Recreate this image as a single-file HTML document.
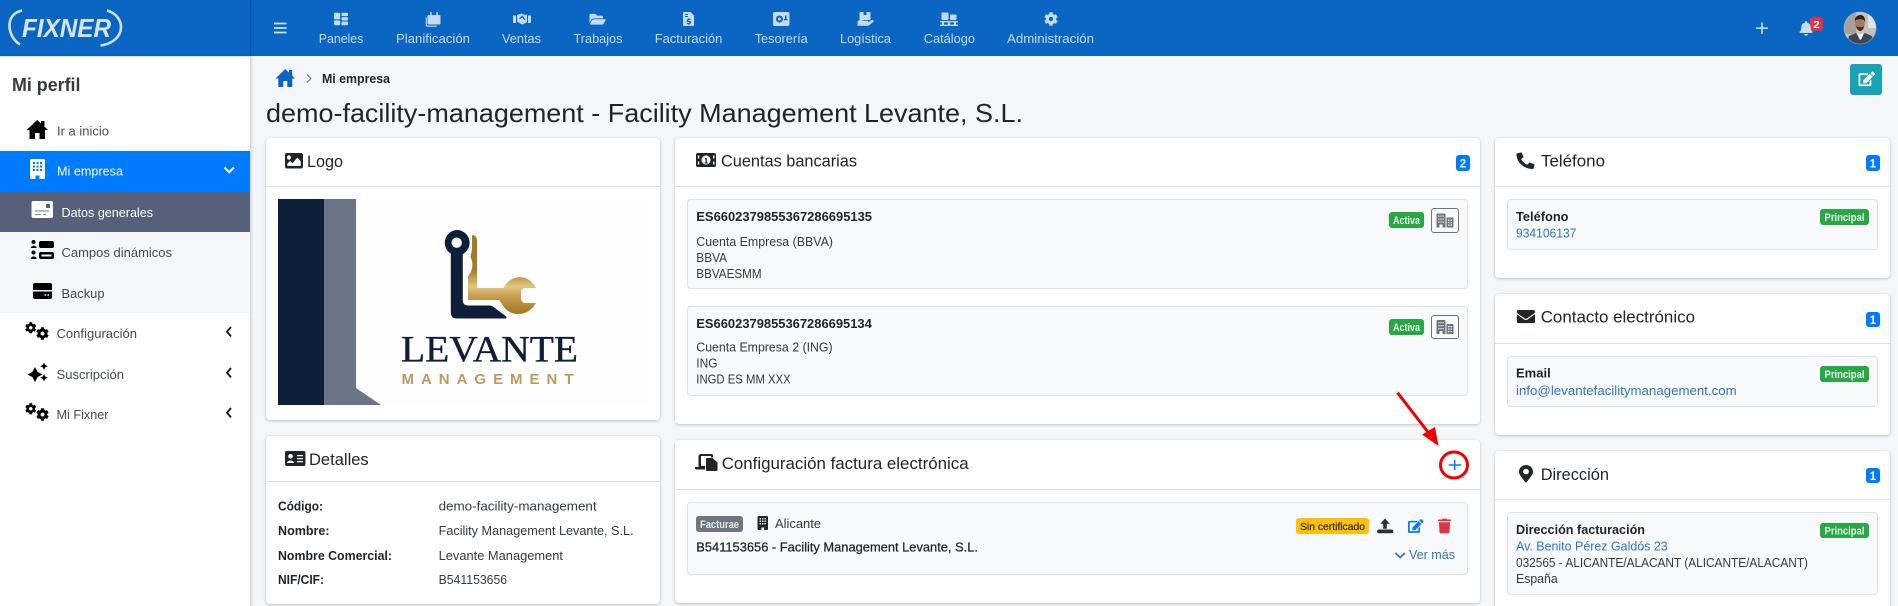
<!DOCTYPE html>
<html lang="es">
<head>
<meta charset="utf-8">
<title>Mi empresa</title>
<style>
html,body{margin:0;padding:0;width:1898px;height:606px;overflow:hidden;background:#f4f6f9;font-family:"Liberation Sans",sans-serif}
#page{position:relative;width:1898px;height:606px;overflow:hidden;background:#f4f6f9}
.a{position:absolute}
.card{position:absolute;background:#fff;border-radius:4px;box-shadow:0 0 1px rgba(0,0,0,.125),0 1px 3px rgba(0,0,0,.2)}
.hr{position:absolute;height:1px;background:#dfe1e4}
.item{position:absolute;background:#f8f9fa;border:1px solid #dee2e6;border-radius:4px;box-sizing:border-box}
.badge{position:absolute;border-radius:3px}
svg.o{position:absolute;left:0;top:0}
text{font-family:"Liberation Sans",sans-serif;font-size:13px;fill:#343a40}
.b{font-weight:700;fill:#212529}
.n{fill:#c6dbf1;font-size:13px}
.s{fill:#454b52;font-size:13px}
.t{font-size:17px;fill:#212529}
.l{fill:#2f75c9}
.w{fill:#fff}
.sm{font-size:11px}
</style>
</head>
<body>
<div id="page">
<div class="a" style="left:0;top:0;width:1898px;height:56px;background:#0b66c3"></div>
<div class="a" style="left:0;top:0;width:250px;height:56px;background:#0b66c3;box-shadow:1px 0 2px rgba(0,0,0,.25)"></div>
<div class="a" style="left:0;top:56px;width:250px;height:560px;background:#fff;border-top:1px solid #dee2e6;box-sizing:border-box;box-shadow:1px 0 3px rgba(0,0,0,.2)"></div>
<div class="a" style="left:0;top:151px;width:250px;height:41px;background:#007bff"></div>
<div class="a" style="left:0;top:192px;width:250px;height:40px;background:#566179"></div>
<div class="a" style="left:0;top:232px;width:250px;height:81px;background:#f4f6f9"></div>

<div class="card" style="left:266px;top:138px;width:394px;height:282px"><div class="hr" style="left:0;right:0;top:48px"></div></div>
<div class="a" style="left:278px;top:199px;width:370px;height:206px;background:#fefefe"></div>
<div class="card" style="left:266px;top:436px;width:394px;height:168px"><div class="hr" style="left:0;right:0;top:45px"></div></div>

<div class="card" style="left:675px;top:138px;width:805px;height:286px"><div class="hr" style="left:0;right:0;top:48px"></div></div>
<div class="item" style="left:687px;top:199px;width:781px;height:90px"></div>
<div class="item" style="left:687px;top:306px;width:781px;height:90px"></div>
<div class="card" style="left:675px;top:440px;width:805px;height:163px"><div class="hr" style="left:0;right:0;top:49px"></div></div>
<div class="item" style="left:687px;top:502px;width:781px;height:73px"></div>

<div class="card" style="left:1495px;top:138px;width:395px;height:140px"><div class="hr" style="left:0;right:0;top:48px"></div></div>
<div class="item" style="left:1507px;top:199px;width:371px;height:51px"></div>
<div class="card" style="left:1495px;top:294px;width:395px;height:141px"><div class="hr" style="left:0;right:0;top:49px"></div></div>
<div class="item" style="left:1507px;top:356px;width:371px;height:51px"></div>
<div class="card" style="left:1495px;top:451px;width:395px;height:175px"><div class="hr" style="left:0;right:0;top:48px"></div></div>
<div class="item" style="left:1507px;top:512px;width:371px;height:83px"></div>

<div class="badge" style="left:1456px;top:155px;width:14px;height:16px;background:#007bff"></div>
<div class="badge" style="left:1866px;top:155px;width:14px;height:16px;background:#007bff"></div>
<div class="badge" style="left:1866px;top:312px;width:14px;height:15px;background:#007bff"></div>
<div class="badge" style="left:1866px;top:468px;width:14px;height:15px;background:#007bff"></div>
<div class="badge" style="left:1389px;top:212px;width:35px;height:16px;background:#28a745"></div>
<div class="badge" style="left:1389px;top:319px;width:35px;height:16px;background:#28a745"></div>
<div class="badge" style="left:1820px;top:209px;width:49px;height:16px;background:#28a745"></div>
<div class="badge" style="left:1820px;top:366px;width:49px;height:16px;background:#28a745"></div>
<div class="badge" style="left:1820px;top:523px;width:49px;height:15px;background:#28a745"></div>
<div class="badge" style="left:696px;top:516px;width:47px;height:16px;background:#6c757d"></div>
<div class="badge" style="left:1296px;top:518px;width:73px;height:16px;background:#ffc107"></div>
<div class="badge" style="left:1431px;top:208px;width:28px;height:25px;border:1px solid #6c757d;box-sizing:border-box"></div>
<div class="badge" style="left:1431px;top:315px;width:28px;height:24px;border:1px solid #6c757d;box-sizing:border-box"></div>
<div class="badge" style="left:1850px;top:64px;width:32px;height:31px;background:#17a2b8"></div>
<div class="badge" style="left:1810px;top:17px;width:13px;height:14px;background:#dc3545"></div>

<svg class="o" width="1898" height="606" viewBox="0 0 1898 606" xmlns="http://www.w3.org/2000/svg">
<defs>
<symbol id="cog" viewBox="0 0 512 512"><path d="M487.4 315.7l-42.6-24.6c4.3-23.2 4.3-47 0-70.2l42.6-24.6c4.9-2.8 7.1-8.6 5.5-14-11.1-35.6-30-67.8-54.7-94.6-3.8-4.1-10-5.1-14.8-2.3L380.8 110c-17.9-15.4-38.5-27.3-60.8-35.1V25.8c0-5.6-3.9-10.5-9.4-11.7-36.7-8.2-74.3-7.8-109.2 0-5.5 1.2-9.4 6.1-9.4 11.7V75c-22.2 7.9-42.8 19.8-60.8 35.1L88.7 85.5c-4.9-2.8-11-1.9-14.8 2.3-24.7 26.7-43.6 58.9-54.7 94.6-1.7 5.4.6 11.2 5.5 14L67.3 221c-4.3 23.2-4.3 47 0 70.2l-42.6 24.6c-4.9 2.8-7.1 8.6-5.5 14 11.1 35.6 30 67.8 54.7 94.6 3.8 4.1 10 5.1 14.8 2.3l42.6-24.6c17.9 15.4 38.5 27.3 60.8 35.1v49.2c0 5.6 3.9 10.5 9.4 11.7 36.7 8.2 74.3 7.8 109.2 0 5.5-1.2 9.4-6.1 9.4-11.7v-49.2c22.2-7.9 42.8-19.8 60.8-35.1l42.6 24.6c4.9 2.8 11 1.9 14.8-2.3 24.7-26.7 43.6-58.9 54.7-94.6 1.5-5.5-.7-11.3-5.6-14.1zM256 336c-44.1 0-80-35.9-80-80s35.9-80 80-80 80 35.9 80 80-35.9 80-80 80z"/></symbol>
<symbol id="edit" viewBox="0 0 576 512"><path d="M402.6 83.2l90.2 90.2c3.8 3.8 3.8 10 0 13.8L274.4 405.6l-92.8 10.3c-12.4 1.4-22.9-9.1-21.5-21.5l10.3-92.8L388.8 83.2c3.8-3.8 10-3.8 13.8 0zm162-22.9l-48.8-48.8c-15.2-15.2-39.9-15.2-55.2 0l-35.4 35.4c-3.8 3.8-3.8 10 0 13.8l90.2 90.2c3.8 3.8 10 3.8 13.8 0l35.4-35.4c15.2-15.3 15.2-40 0-55.2zM384 346.2V448H64V128h229.8c3.2 0 6.2-1.3 8.5-3.5l40-40c7.6-7.6 2.2-20.5-8.5-20.5H48C21.5 64 0 85.5 0 112v352c0 26.5 21.5 48 48 48h352c26.5 0 48-21.5 48-48V306.2c0-10.7-12.9-16-20.5-8.5l-40 40c-2.2 2.3-3.5 5.3-3.5 8.5z"/></symbol>
<symbol id="bld" viewBox="0 0 15 20"><path fill-rule="evenodd" d="M1.5 0h12A1.500 1.500 0 0 1 15 1.500V18.500A1.500 1.500 0 0 1 13.500 20H9.500V16.500H5.500V20H1.500A1.500 1.500 0 0 1 0 18.500V1.500A1.500 1.500 0 0 1 1.500 0zM3 3v2h2V3zM6.500 3v2h2V3zM10 3v2h2V3zM3 6.500v2h2v-2zM6.500 6.500v2h2v-2zM10 6.500v2h2v-2zM3 10v2h2v-2zM6.500 10v2h2v-2zM10 10v2h2v-2z"/></symbol>
<symbol id="cogs" viewBox="0 0 24 18"><use href="#cog" x="0" y="0" width="11.5" height="11.5"/><use href="#cog" x="11" y="5" width="13" height="13"/></symbol>
<symbol id="bld2" viewBox="0 0 17 14"><path fill-rule="evenodd" d="M0 1a1 1 0 0 1 1-1h7a1 1 0 0 1 1 1v13H6v-3H3v3H0zM1.800 2v1.300h1.200V2zM3.900 2v1.300h1.200V2zM6 2v1.300h1.200V2zM1.800 5v1.300h1.200V5zM3.900 5v1.300h1.200V5zM6 5v1.300h1.200V5zM1.800 8v1.300h1.200V8zM3.900 8v1.300h1.200V8zM6 8v1.300h1.200V8zM10 4h6a1 1 0 0 1 1 1v9h-7zM11.500 6v1.200h1.500V6zM14 6v1.200h1.500V6zM11.500 8.500v1.200h1.500V8.500zM14 8.500v1.200h1.500V8.500zM11.500 11v1.200h1.500V11zM14 11v1.200h1.500V11z"/></symbol>
<linearGradient id="gold" x1="0" y1="0" x2="0" y2="1"><stop offset="0" stop-color="#a4761f"/><stop offset=".45" stop-color="#a87a24"/><stop offset=".66" stop-color="#e2c680"/><stop offset=".76" stop-color="#c9a253"/><stop offset="1" stop-color="#a4761f"/></linearGradient>
<clipPath id="av"><circle cx="1860" cy="28" r="16"/></clipPath>
</defs>

<!-- Header logo -->
<path d="M22 10.500C13 12.500 9 19 9.500 27C10 34 14 41 20 44.500" fill="none" stroke="#cfe1f5" stroke-width="2.600"/>
<path d="M107 10.500C116 13 121 20 121 27C121 37 112 44 100.500 45.500" fill="none" stroke="#cfe1f5" stroke-width="2.600"/>
<text x="22" y="37" font-style="italic" font-weight="700" textLength="89" lengthAdjust="spacingAndGlyphs" style="font-size:26px;fill:#d5e5f6">FIXNER</text>

<!-- Hamburger -->
<path d="M274 23.500h12.500M274 28h12.500M274 32.500h12.500" stroke="#d5e4f5" stroke-width="1.700" fill="none"/>

<!-- Nav icons -->
<g fill="#c6dbf1">
<rect x="334" y="12.700" width="6.200" height="6.700" rx="1.200"/><rect x="334" y="20.400" width="6.200" height="4.800" rx="1.200"/><rect x="341.500" y="12.700" width="6.500" height="3.400" rx="1.100"/><rect x="341.500" y="17.100" width="6.500" height="3.400" rx="1.100"/><rect x="341.500" y="21.500" width="6.500" height="3.700" rx="1.100"/>
<path d="M428.500 15h11a1 1 0 0 1 1 1v7.500a1 1 0 0 1-1 1h-11a1 1 0 0 1-1-1V16a1 1 0 0 1 1-1zM430.200 12h1.500v3h-1.500zM436.300 12h1.500v3h-1.500z"/><path d="M426.300 17.500v7.200a1.500 1.500 0 0 0 1.500 1.500h9" fill="none" stroke="#c6dbf1" stroke-width="1.100"/>
<path fill-rule="evenodd" d="M513 15.500h3v7.500h-3zM528 15.500h3v7.500h-3zM517 15l4.500-1.500 1.800 1 3.700.3v7.400l-4.500 2.300-1.500-.5-4-2.500zM519 18.500l3.500-3 3 4-1 .7-2.200-2.700-2.300 1.700z"/>
<svg x="589.400" y="12" width="16.300" height="14.500" viewBox="0 0 576 512"><path d="M572.694 292.093L500.27 416.248A63.997 63.997 0 0 1 444.989 448H45.025c-18.523 0-30.064-20.093-20.731-36.093l72.424-124.155A64 64 0 0 1 152 256h399.964c18.523 0 30.064 20.093 20.73 36.093zM152 224h328v-48c0-26.51-21.49-48-48-48H272l-64-64H48C21.49 64 0 85.49 0 112v278.046l69.077-118.418C86.214 242.250 117.989 224 152 224z"/></svg>
<path fill-rule="evenodd" d="M684 12h6.500l3.500 3.500V25a1 1 0 0 1-1 1h-9a1 1 0 0 1-1-1V13a1 1 0 0 1 1-1zM685 14v1h3v-1zM685 16v1h3v-1zM688.400 18v1c-1 .2-1.800.8-1.800 1.700 0 1.900 3 1.200 3 2 0 .6-1.500.5-2.500-.1l-.4 1c.5.300 1.100.5 1.700.5v1h1v-1c1-.2 1.800-.9 1.800-1.800 0-1.900-3-1.200-3-2 0-.5 1.300-.5 2.200 0l.4-1c-.5-.2-1-.4-1.500-.4v-1z"/>
<path fill-rule="evenodd" d="M775 12h12.500a2 2 0 0 1 2 2v10a2 2 0 0 1-2 2H775a2 2 0 0 1-2-2V14a2 2 0 0 1 2-2zM779.500 15.500a3.500 3.500 0 1 0 .01 0zM779.500 17.500a1.500 1.500 0 1 1-.01 0zM785 15.500v3.500h-1v1.200h3.500V19h-1v-3.500z"/>
<path d="M860.500 12h3v3h3v-3h3a1 1 0 0 1 1 1v6a1 1 0 0 1-1 1h-9a1 1 0 0 1-1-1v-6a1 1 0 0 1 1-1zM857.500 21.500c2-2 4-2 6-.800h3.500c1.500 0 1.500 2 0 2h-3l4-.5 3.500-2c1.500-.8 3 .8 1.500 2l-4 3a3 3 0 0 1-1.500.5h-10z"/>
<rect x="941.500" y="12.500" width="7" height="7.500" rx="1"/><rect x="950" y="14.500" width="6.500" height="5.500" rx="1"/><path d="M940 21h18v1.400h-18zM940 24.600h18V26h-18zM942 22h2v3h-2zM948 22h2v3h-2zM954 22h2v3h-2z"/>
<use href="#cog" x="1044" y="12" width="14" height="14"/>
</g>
<text class="n" x="318.800" y="43" textLength="44.500" lengthAdjust="spacingAndGlyphs">Paneles</text>
<text class="n" x="396" y="43" textLength="74" lengthAdjust="spacingAndGlyphs">Planificación</text>
<text class="n" x="502" y="43" textLength="39" lengthAdjust="spacingAndGlyphs">Ventas</text>
<text class="n" x="573.500" y="43" textLength="49" lengthAdjust="spacingAndGlyphs">Trabajos</text>
<text class="n" x="654.700" y="43" textLength="67.700" lengthAdjust="spacingAndGlyphs">Facturación</text>
<text class="n" x="754.700" y="43" textLength="53" lengthAdjust="spacingAndGlyphs">Tesorería</text>
<text class="n" x="840" y="43" textLength="51" lengthAdjust="spacingAndGlyphs">Logística</text>
<text class="n" x="923.700" y="43" textLength="51.300" lengthAdjust="spacingAndGlyphs">Catálogo</text>
<text class="n" x="1007" y="43" textLength="87" lengthAdjust="spacingAndGlyphs">Administración</text>

<!-- Header right -->
<path d="M1762 22.500v11.500M1756.200 28.200h11.600" stroke="#c6dbf1" stroke-width="1.600" fill="none"/>
<svg x="1799.500" y="21" width="13" height="14.800" viewBox="0 0 448 512" fill="#c6dbf1"><path d="M224 512c35.320 0 63.970-28.650 63.970-64H160.030c0 35.350 28.650 64 63.970 64zm215.390-149.710c-19.320-20.760-55.470-51.990-55.470-154.290 0-77.700-54.480-139.900-127.940-155.160V32c0-17.670-14.320-32-31.980-32s-31.980 14.330-31.980 32v20.840C118.560 68.100 64.080 130.300 64.080 208c0 102.300-36.150 133.530-55.470 154.290-6 6.450-8.660 14.160-8.610 21.710.11 16.400 12.980 32 32.100 32h383.800c19.120 0 32-15.600 32.100-32 .05-7.550-2.610-15.270-8.610-21.710z"/></svg>
<text x="1813.300" y="28" class="w b" textLength="6.400" lengthAdjust="spacingAndGlyphs" style="font-size:10.500px;fill:#fff">2</text>
<g clip-path="url(#av)">
<rect x="1844" y="12" width="32" height="32" fill="#c4c0ba"/>
<rect x="1844" y="12" width="12" height="22" fill="#a8a198"/>
<rect x="1868" y="14" width="8" height="14" fill="#dfe1e3"/>
<path d="M1847 44l2-8 7-3 4 4 5-4 7 3 2 8z" fill="#3f4652"/>
<path d="M1856.500 33l3.500 7 1.500-1 2.500-6-3 1h-2z" fill="#eef0f2"/>
<ellipse cx="1860" cy="24" rx="4.600" ry="6.500" fill="#a97a5c"/>
<path d="M1855 23c-1-6 2.500-8 5.300-8s5.300 2 4.800 8l-1-3-4-1-4.500 1z" fill="#2a221f"/>
<path d="M1856 26c1 4 2.700 5 4.200 5s3-1 4-5l-1.500 1h-5z" fill="#3e2f28"/>
</g>
<circle cx="1860" cy="28" r="16" fill="none" stroke="#fff" stroke-opacity=".25"/>

<!-- Sidebar -->
<text x="12" y="91" font-weight="700" textLength="68.500" lengthAdjust="spacingAndGlyphs" style="font-size:18px;fill:#343a40">Mi perfil</text>
<path d="M37.200 120L41 123.500V121h3.500v5.700L48 130h-3v9h-5.500v-6h-4.500v6H29.500v-9h-3z" fill="#000"/>
<text class="s" x="57" y="135.500" textLength="52" lengthAdjust="spacingAndGlyphs">Ir a inicio</text>
<use href="#bld" x="30" y="159" width="15" height="20" fill="#fff"/>
<text class="w" x="57" y="175.500" textLength="66" lengthAdjust="spacingAndGlyphs">Mi empresa</text>
<path d="M224.500 167.500l4.700 4.700 4.700-4.700" fill="none" stroke="#fff" stroke-width="2"/>

<rect x="31.500" y="201" width="21.500" height="17" rx="2" fill="#fff"/>
<rect x="46" y="204" width="4" height="4" fill="#566179"/><path d="M35 211h14M35 214.500h6M43 214.500h3" stroke="#8a93a6" stroke-width="1.200"/>
<text class="w" x="61.500" y="217" textLength="91.500" lengthAdjust="spacingAndGlyphs">Datos generales</text>

<g fill="#000"><circle cx="33.500" cy="242" r="2"/><path d="M30.700 248c0-3 6-3 6 0z"/><circle cx="33.500" cy="252.500" r="2"/><path d="M30.700 259c0-3.400 6-3.400 6 0z"/>
<path fill-rule="evenodd" d="M41 241h11a2 2 0 0 1 2 2v3a2 2 0 0 1-2 2H41a2 2 0 0 1-2-2v-3a2 2 0 0 1 2-2zM41 252h11a2 2 0 0 1 2 2v3a2 2 0 0 1-2 2H41a2 2 0 0 1-2-2v-3a2 2 0 0 1 2-2zM41.500 254.500v2h10v-2z"/></g>
<text class="s" x="61.500" y="257" textLength="110.500" lengthAdjust="spacingAndGlyphs">Campos dinámicos</text>

<path fill-rule="evenodd" d="M35 283h15a2 2 0 0 1 2 2v5H33v-5a2 2 0 0 1 2-2zM33 291.500h19V297a2 2 0 0 1-2 2H35a2 2 0 0 1-2-2zM44.500 294.200v1.600h1.600v-1.600zM47.500 294.200v1.600h1.600v-1.600z"/>
<text class="s" x="61.500" y="298" textLength="43" lengthAdjust="spacingAndGlyphs">Backup</text>

<use href="#cogs" x="25" y="322" width="24" height="18"/>
<text class="s" x="56.500" y="338" textLength="80.500" lengthAdjust="spacingAndGlyphs">Configuración</text>
<path d="M231 327l-4 4.700 4 4.700" fill="none" stroke="#111" stroke-width="1.800"/>
<path d="M35 367L37.700 372L42.500 374.500L37.700 377L35 382L32.300 377L27.500 374.500L32.300 372Z M44 362.500l1.200 2.500 2.600 1.200-2.600 1.200-1.200 2.600-1.200-2.600-2.600-1.200 2.600-1.200z M44 374l1.200 2.500 2.600 1.200-2.600 1.200-1.200 2.600-1.200-2.600-2.600-1.200 2.600-1.200z" fill="#000"/>
<text class="s" x="56.500" y="379" textLength="67.500" lengthAdjust="spacingAndGlyphs">Suscripción</text>
<path d="M231 368l-4 4.700 4 4.700" fill="none" stroke="#111" stroke-width="1.800"/>
<use href="#cogs" x="25" y="403" width="24" height="18"/>
<text class="s" x="56.500" y="419" textLength="52" lengthAdjust="spacingAndGlyphs">Mi Fixner</text>
<path d="M231 408l-4 4.700 4 4.700" fill="none" stroke="#111" stroke-width="1.800"/>

<!-- Breadcrumb + title -->
<path d="M285.200 69L289 72.500V70h3.200v5.500L295 78.500h-2.700V87h-5v-6h-4v6h-5v-8.500h-2.800z" fill="#0b66c3"/>
<path d="M307 74.500l4 4-4 4" fill="none" stroke="#6c757d" stroke-width="1"/>
<text x="322" y="83" font-weight="700" textLength="68" lengthAdjust="spacingAndGlyphs" style="font-size:12.500px;fill:#212529">Mi empresa</text>
<text x="266" y="122" textLength="757" lengthAdjust="spacingAndGlyphs" style="font-size:26px;fill:#212529">demo-facility-management - Facility Management Levante, S.L.</text>
<use href="#edit" x="1858.500" y="71.500" width="16.500" height="14.700" fill="#fff"/>

<!-- Logo card -->
<svg x="285" y="153" width="18" height="15.500" viewBox="0 64 512 384" preserveAspectRatio="none" fill="#212529"><path d="M464 448H48c-26.510 0-48-21.490-48-48V112c0-26.510 21.490-48 48-48h416c26.510 0 48 21.490 48 48v288c0 26.510-21.490 48-48 48zM112 120c-30.928 0-56 25.072-56 56s25.072 56 56 56 56-25.072 56-56-25.072-56-56-56zM64 384h384V272l-87.515-87.515c-4.686-4.686-12.284-4.686-16.971 0L208 320l-55.515-55.515c-4.686-4.686-12.284-4.686-16.971 0L64 336v48z"/></svg>
<text class="t" x="307" y="167" textLength="36" lengthAdjust="spacingAndGlyphs">Logo</text>
<rect x="278" y="199" width="46" height="206" fill="#0e1f3a"/>
<path d="M324 199h32v189l25 17h-57z" fill="#6a7588"/>
<!-- gold key + wrench -->
<path fill-rule="evenodd" d="M472 235c3.500 0 5 2.500 5 6v47h26.500c3-6 8.500-10.500 15-10.800 7.500-.4 13.500 3.200 17.500 10.800h-12.500l-2.500 2.500v9.500l2.500 3h12.500c-4 7-10 11-17.500 11-7 0-13.500-3.500-16.500-10l-3-4H468v-24c5-5 5.500-13 2.500-19 2-7 1.500-14 1.500-23z" fill="url(#gold)"/>
<!-- navy key -->
<path d="M456.700 229.500a13.300 13.300 0 0 1 6.600 24.900V300c0 3.500 1.500 5 5 5h22c1.500 0 2.500.5 3.500 1.500l12.500 9.500c1.200 1.500.5 3-1 3h-48c-5.500 0-7-2-7-7.500v-57.600a13.300 13.300 0 0 1 6.400-24.400z" fill="#0e1f3a" stroke="#fff" stroke-width="1"/>
<circle cx="456.700" cy="242.700" r="5.200" fill="#fff"/>
<text x="401" y="361.700" textLength="177" lengthAdjust="spacingAndGlyphs" style="font-family:'Liberation Serif',serif;font-size:37px;fill:#0e1f3a;stroke:#0e1f3a;stroke-width:.35">LEVANTE</text>
<text x="401.500" y="384" textLength="172" style="font-size:15px;font-weight:700;fill:#bb9b60">MANAGEMENT</text>

<!-- Detalles -->
<path fill-rule="evenodd" fill="#212529" d="M287 451h16.500a2 2 0 0 1 2 2v11a2 2 0 0 1-2 2H287a2 2 0 0 1-2-2v-11a2 2 0 0 1 2-2zM290.500 454a2.300 2.300 0 1 0 .01 0zM287 463h7c0-3.300-7-3.300-7 0zM297 455v1.300h6V455zM297 458v1.300h6V458zM297 461v1.300h6V461z"/>
<text class="t" x="309" y="465" textLength="59.700" lengthAdjust="spacingAndGlyphs">Detalles</text>
<text class="b" x="278" y="510.700" textLength="45" lengthAdjust="spacingAndGlyphs">Código:</text>
<text class="b" x="278" y="535" textLength="51.600" lengthAdjust="spacingAndGlyphs">Nombre:</text>
<text class="b" x="278" y="560" textLength="114" lengthAdjust="spacingAndGlyphs">Nombre Comercial:</text>
<text class="b" x="278" y="584" textLength="46" lengthAdjust="spacingAndGlyphs">NIF/CIF:</text>
<text x="438.600" y="510.700" textLength="158" lengthAdjust="spacingAndGlyphs">demo-facility-management</text>
<text x="438.600" y="535" textLength="195" lengthAdjust="spacingAndGlyphs">Facility Management Levante, S.L.</text>
<text x="438.600" y="560" textLength="124.400" lengthAdjust="spacingAndGlyphs">Levante Management</text>
<text x="438.600" y="584" textLength="68.500" lengthAdjust="spacingAndGlyphs">B541153656</text>

<!-- Cuentas -->
<path fill-rule="evenodd" fill="#212529" d="M698 153h16a2 2 0 0 1 2 2v10a2 2 0 0 1-2 2h-16a2 2 0 0 1-2-2v-10a2 2 0 0 1 2-2zM706 155.500a4.500 4.500 0 1 0 .01 0zM697.800 155.500v3h1.500v-3zM697.800 161.500v3h1.500v-3zM713 155.500v3h1.500v-3zM713 161.500v3h1.500v-3z"/>
<path d="M705.200 158h1.600v4.500h1v1h-3.200v-1h1v-3h-.8z" fill="#212529"/>
<text class="t" x="721" y="166.500" textLength="136" lengthAdjust="spacingAndGlyphs">Cuentas bancarias</text>
<text class="w" x="1459.800" y="167.500" textLength="6.400" lengthAdjust="spacingAndGlyphs" style="font-size:11.500px;font-weight:700;fill:#fff">2</text>

<text class="b" x="696.300" y="221" textLength="175.700" lengthAdjust="spacingAndGlyphs">ES6602379855367286695135</text>
<text x="696.300" y="246" textLength="136.700" lengthAdjust="spacingAndGlyphs">Cuenta Empresa (BBVA)</text>
<text x="696.300" y="262" textLength="30.700" lengthAdjust="spacingAndGlyphs">BBVA</text>
<text x="696.300" y="278" textLength="65.300" lengthAdjust="spacingAndGlyphs">BBVAESMM</text>
<text class="w sm" x="1393" y="224" textLength="27" lengthAdjust="spacingAndGlyphs" style="font-weight:700;fill:#e8f6eb">Activa</text>
<use href="#bld2" x="1436.500" y="213.500" width="17" height="14" fill="#6c757d"/>

<text class="b" x="696.300" y="328" textLength="175.500" lengthAdjust="spacingAndGlyphs">ES6602379855367286695134</text>
<text x="696.300" y="351.700" textLength="136.300" lengthAdjust="spacingAndGlyphs">Cuenta Empresa 2 (ING)</text>
<text x="696.300" y="367.700" textLength="21.200" lengthAdjust="spacingAndGlyphs">ING</text>
<text x="696.300" y="383.700" textLength="94.400" lengthAdjust="spacingAndGlyphs">INGD ES MM XXX</text>
<text class="w sm" x="1393" y="331" textLength="27" lengthAdjust="spacingAndGlyphs" style="font-weight:700;fill:#e8f6eb">Activa</text>
<use href="#bld2" x="1436.500" y="320" width="17" height="14" fill="#6c757d"/>

<!-- Factura electrónica -->
<g fill="#212529"><path fill-rule="evenodd" d="M699 454h12.500a1.500 1.500 0 0 1 1.500 1.500v2h-2v-1.500h-10v10h4v3.500h-9a1 1 0 0 1-1-1v-1.500h3.500v-11.500a1.500 1.500 0 0 1 1.500-.500z"/><path d="M707 458h5.500l5 4.500v7.500a1 1 0 0 1-1 1H707a1 1 0 0 1-1-1v-11a1 1 0 0 1 1-1z"/></g>
<text class="t" x="721.700" y="469" textLength="246.900" lengthAdjust="spacingAndGlyphs">Configuración factura electrónica</text>
<ellipse cx="1454" cy="465" rx="13.500" ry="13" fill="#fff" stroke="#f40000" stroke-width="3"/>
<path d="M1454.700 460v10M1448.700 465h12.500" stroke="#007bff" stroke-width="1.500" fill="none"/>
<path d="M1397.500 392.700L1431 436" stroke="#f00000" stroke-width="3" fill="none"/>
<path d="M1438.500 446l-16.500-11.500 13-7.500z" fill="#f00000"/>

<text class="w sm" x="700" y="528" textLength="39" lengthAdjust="spacingAndGlyphs" style="font-weight:700;fill:#e6e8ea">Facturae</text>
<use href="#bld" x="757.500" y="516" width="10.500" height="14" fill="#212529"/>
<text x="775" y="528" textLength="46" lengthAdjust="spacingAndGlyphs">Alicante</text>
<text x="696.300" y="551.700" textLength="281.700" lengthAdjust="spacingAndGlyphs" style="fill:#212529;stroke:#212529;stroke-width:.25">B541153656 - Facility Management Levante, S.L.</text>
<text x="1300" y="530" textLength="65" lengthAdjust="spacingAndGlyphs" style="font-size:10.500px;fill:#212529;stroke:#212529;stroke-width:.15">Sin certificado</text>
<path d="M1385 518.500l-4.800 5.200h3v5h3.600v-5h3z M1379 529.500h12.500a1.800 1.800 0 0 1 0 3.800H1379a1.800 1.800 0 0 1 0-3.800z" fill="#2b3036"/>
<use href="#edit" x="1408" y="519" width="15.500" height="14" fill="#007bff"/>
<svg x="1438" y="518.500" width="13" height="15" viewBox="0 0 448 512" fill="#dc3545"><path d="M432 32H312l-9.400-18.700A24 24 0 0 0 281.100 0H166.800a23.720 23.720 0 0 0-21.400 13.300L136 32H16A16 16 0 0 0 0 48v32a16 16 0 0 0 16 16h416a16 16 0 0 0 16-16V48a16 16 0 0 0-16-16zM53.200 467a48 48 0 0 0 47.900 45h245.800a48 48 0 0 0 47.900-45L416 128H32z"/></svg>
<path d="M1395.500 553l4.700 4.500 4.700-4.500" fill="none" stroke="#1f74d0" stroke-width="1.700"/>
<text class="l" x="1409" y="559" textLength="46" lengthAdjust="spacingAndGlyphs">Ver más</text>

<!-- Teléfono -->
<svg x="1516.500" y="152.500" width="18" height="16.500" viewBox="0 0 512 512" preserveAspectRatio="none" fill="#212529"><path d="M497.390 361.800l-112-48a24 24 0 0 0-28 6.900l-49.600 60.600A370.660 370.660 0 0 1 130.600 204.110l60.600-49.600a23.940 23.940 0 0 0 6.900-28l-48-112A24.160 24.160 0 0 0 122.600.610l-104 24A24 24 0 0 0 0 48c0 256.500 207.900 464 464 464a24 24 0 0 0 23.400-18.600l24-104a24.290 24.290 0 0 0-14.010-27.600z"/></svg>
<text class="t" x="1541" y="166.500" textLength="64" lengthAdjust="spacingAndGlyphs">Teléfono</text>
<text class="w" x="1869.800" y="167.500" textLength="6.400" lengthAdjust="spacingAndGlyphs" style="font-size:11.500px;font-weight:700;fill:#fff">1</text>
<text class="b" x="1516" y="221" textLength="52.500" lengthAdjust="spacingAndGlyphs">Teléfono</text>
<text class="l" x="1516" y="237.500" textLength="60.400" lengthAdjust="spacingAndGlyphs">934106137</text>
<text class="w sm" x="1824.500" y="221" textLength="40" lengthAdjust="spacingAndGlyphs" style="fill:#e8f6eb;font-weight:700">Principal</text>

<!-- Contacto -->
<svg x="1516.700" y="310" width="18.300" height="13.300" viewBox="0 64 512 384" preserveAspectRatio="none" fill="#212529"><path d="M502.300 190.800c3.900-3.100 9.700-.2 9.700 4.700V400c0 26.500-21.500 48-48 48H48c-26.500 0-48-21.500-48-48V195.600c0-5 5.700-7.800 9.700-4.700 22.400 17.400 52.100 39.500 154.100 113.600 21.100 15.400 56.700 47.800 92.200 47.600 35.700.3 72-32.800 92.300-47.600 102-74.100 131.600-96.300 154-113.700zM256 320c23.200.4 56.600-29.200 73.400-41.400 132.700-96.300 142.800-104.700 173.400-128.700 5.800-4.500 9.200-11.500 9.200-18.900v-19c0-26.500-21.500-48-48-48H48C21.500 64 0 85.500 0 112v19c0 7.400 3.400 14.300 9.200 18.900 30.600 23.900 40.700 32.400 173.400 128.700 16.800 12.200 50.200 41.800 73.400 41.400z"/></svg>
<text class="t" x="1540.700" y="322.700" textLength="154.300" lengthAdjust="spacingAndGlyphs">Contacto electrónico</text>
<text class="w" x="1869.800" y="324" textLength="6.400" lengthAdjust="spacingAndGlyphs" style="font-size:11.500px;font-weight:700;fill:#fff">1</text>
<text class="b" x="1516" y="377.700" textLength="34.700" lengthAdjust="spacingAndGlyphs">Email</text>
<text class="l" x="1516" y="395" textLength="220.700" lengthAdjust="spacingAndGlyphs">info@levantefacilitymanagement.com</text>
<text class="w sm" x="1824.500" y="378" textLength="40" lengthAdjust="spacingAndGlyphs" style="fill:#e8f6eb;font-weight:700">Principal</text>

<!-- Dirección -->
<svg x="1519" y="465" width="14" height="17.500" viewBox="0 0 384 512" preserveAspectRatio="none" fill="#212529"><path d="M172.268 501.670C26.970 291.031 0 268.413 0 192 0 85.961 85.961 0 192 0s192 85.961 192 192c0 76.413-26.970 99.031-172.268 309.670-9.535 13.774-29.930 13.773-39.464 0zM192 272c44.183 0 80-35.817 80-80s-35.817-80-80-80-80 35.817-80 80 35.817 80 80 80z"/></svg>
<text class="t" x="1540.700" y="480" textLength="68.300" lengthAdjust="spacingAndGlyphs">Dirección</text>
<text class="w" x="1869.800" y="480" textLength="6.400" lengthAdjust="spacingAndGlyphs" style="font-size:11.500px;font-weight:700;fill:#fff">1</text>
<text class="b" x="1516" y="534" textLength="129" lengthAdjust="spacingAndGlyphs">Dirección facturación</text>
<text class="l" x="1516" y="550.700" textLength="151.700" lengthAdjust="spacingAndGlyphs">Av. Benito Pérez Galdós 23</text>
<text x="1516" y="567" textLength="292" lengthAdjust="spacingAndGlyphs">032565 - ALICANTE/ALACANT (ALICANTE/ALACANT)</text>
<text x="1516" y="583" textLength="41.700" lengthAdjust="spacingAndGlyphs">España</text>
<text class="w sm" x="1824.500" y="534.500" textLength="40" lengthAdjust="spacingAndGlyphs" style="fill:#e8f6eb;font-weight:700">Principal</text>
</svg>
</div>
</body>
</html>
